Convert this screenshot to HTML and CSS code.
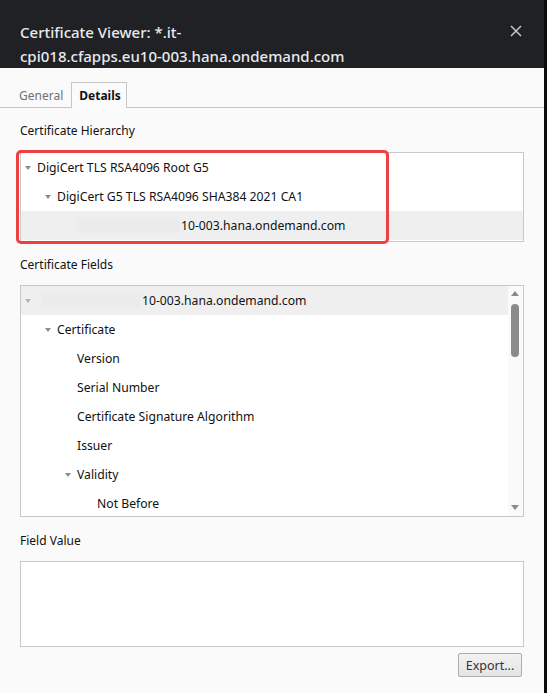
FILE: index.html
```html
<!DOCTYPE html>
<html lang="en">
<head>
  <meta charset="UTF-8" />
  <title>Certificate Viewer</title>
  <link rel="stylesheet" href="styles.css">
</head>
<body>
  <div class="dialog">
    <header class="titlebar">
      <h1>Certificate Viewer: *.it-<br>cpi018.cfapps.eu10-003.hana.ondemand.com</h1>
      <button class="close" aria-label="Close">
        <svg width="12" height="12" viewBox="0 0 12 12"><path d="M1 1 L11 11 M11 1 L1 11" stroke="#c4c7c5" stroke-width="1.5"/></svg>
      </button>
    </header>

    <nav class="tabs">
      <span class="tab">General</span>
      <span class="tab active">Details</span>
    </nav>

    <section class="content">
      <p class="label">Certificate Hierarchy</p>
      <div class="tree hierarchy">
        <div class="row lvl0"><span class="caret"></span>DigiCert TLS RSA4096 Root G5</div>
        <div class="row lvl1"><span class="caret"></span>DigiCert G5 TLS RSA4096 SHA384 2021 CA1</div>
        <div class="row lvl2 selected"><span class="slot"></span><span class="blur b-long"></span>10-003.hana.ondemand.com</div>
      </div>

      <p class="label">Certificate Fields</p>
      <div class="tree fields">
        <div class="list">
          <div class="row lvl0 selected"><span class="caret light"></span><span class="blur b-short"></span>10-003.hana.ondemand.com</div>
          <div class="row lvl1"><span class="caret"></span>Certificate</div>
          <div class="row lvl2"><span class="slot"></span>Version</div>
          <div class="row lvl2"><span class="slot"></span>Serial Number</div>
          <div class="row lvl2"><span class="slot"></span>Certificate Signature Algorithm</div>
          <div class="row lvl2"><span class="slot"></span>Issuer</div>
          <div class="row lvl2"><span class="caret"></span>Validity</div>
          <div class="row lvl3"><span class="slot"></span>Not Before</div>
        </div>
        <div class="scrollbar">
          <span class="arrow up"></span>
          <span class="thumb"></span>
          <span class="arrow down"></span>
        </div>
      </div>

      <p class="label field-label">Field Value</p>
      <div class="value-box"></div>

      <div class="actions">
        <button class="export">Export...</button>
      </div>
    </section>
  </div>
</body>
</html>
```

FILE: styles.css
```css
*, *::before, *::after {
  box-sizing: border-box;
}
body {
  margin: 0;
  background: #0c0c0d;
  font-family: "Noto Sans", "Open Sans", sans-serif;
  color: #111;
}
.dialog {
  width: 544px;
  height: 693px;
  background: #fafafa;
}
.titlebar {
  position: relative;
  height: 68px;
  background: #202124;
  padding: 20px 20px 0;
}
.titlebar h1 {
  margin: 0;
  font-size: 15px;
  font-weight: 500;
  line-height: 24px;
  color: #e8eaed;
}
.close {
  position: absolute;
  top: 25px;
  right: 22px;
  padding: 0;
  border: none;
  background: none;
  width: 12px;
  height: 12px;
}
.close svg {
  display: block;
}
.tabs {
  display: flex;
  margin-top: 14px;
  height: 26px;
  padding-left: 8px;
  border-bottom: 1px solid #c6c6c6;
  font-size: 12px;
}
.tab {
  padding: 0 8px 0 11px;
  line-height: 27px;
  color: #707070;
}
.tab.active {
  color: #111;
  font-weight: 700;
  padding: 0 7px;
  width: 56px;
  text-align: center;
  background: #fbfbfb;
  border: 1px solid #c6c6c6;
  border-bottom: none;
  height: 26px;
  line-height: 25px;
  margin-bottom: -1px;
}
.content {
  padding: 0 20px;
}
.label {
  margin: 14px 0 11px;
  font-size: 12px;
  line-height: 18px;
}
.content .label:first-child {
  margin-top: 14px;
  margin-bottom: 12px;
}
.label.field-label {
  margin-top: 15px;
  margin-bottom: 11px;
}
.tree {
  position: relative;
  background: #fff;
  border: 1px solid #c8c8c8;
  font-size: 12.2px;
}
.hierarchy {
  padding: 0 0 1px;
}
.row {
  display: flex;
  align-items: center;
  height: 29px;
  white-space: nowrap;
}
.row.selected {
  background: #efefef;
}
.lvl0 { padding-left: 4px; }
.lvl1 { padding-left: 24px; }
.lvl2 { padding-left: 44px; }
.lvl3 { padding-left: 64px; }
.caret, .slot {
  flex: none;
  width: 12px;
  height: 10px;
  position: relative;
}
.caret::before {
  content: "";
  position: absolute;
  left: 0;
  top: 3px;
  border-left: 3.5px solid transparent;
  border-right: 3.5px solid transparent;
  border-top: 4px solid #8c8c8c;
}
.caret.light::before {
  border-top-color: #b4b4b4;
}
.blur {
  display: inline-block;
  height: 14px;
  background: #ebebeb;
  filter: blur(1.5px);
  margin-right: 1px;
}
.b-long { width: 103px; }
.b-short { width: 100px; margin-left: 4px; }
.hierarchy::after {
  content: "";
  position: absolute;
  left: -5px;
  top: -3px;
  width: 373px;
  height: 94px;
  border: 3px solid #ee3f41;
  border-radius: 5px;
}
.fields {
  display: flex;
  height: 232px;
  overflow: hidden;
}
.list {
  flex: 1;
}
.scrollbar {
  position: relative;
  width: 15px;
  background: #fafafa;
}
.arrow {
  position: absolute;
  left: 3px;
  border-left: 4px solid transparent;
  border-right: 4px solid transparent;
}
.arrow.up {
  top: 5px;
  border-bottom: 5px solid #8a8a8a;
}
.arrow.down {
  bottom: 6px;
  border-top: 5px solid #8a8a8a;
}
.thumb {
  position: absolute;
  left: 3px;
  top: 18px;
  width: 8px;
  height: 53px;
  border-radius: 4px;
  background: #8b8b8b;
}
.value-box {
  height: 86px;
  background: #fff;
  border: 1px solid #c8c8c8;
}
.actions {
  display: flex;
  justify-content: flex-end;
  padding: 6px 2px 0 0;
}
.export {
  width: 64px;
  height: 24px;
  padding: 0;
  font-family: inherit;
  font-size: 12.5px;
  color: #333;
  border: 1px solid #adadad;
  border-radius: 2px;
  background: linear-gradient(#f2f2f2, #e4e4e4);
}
```
